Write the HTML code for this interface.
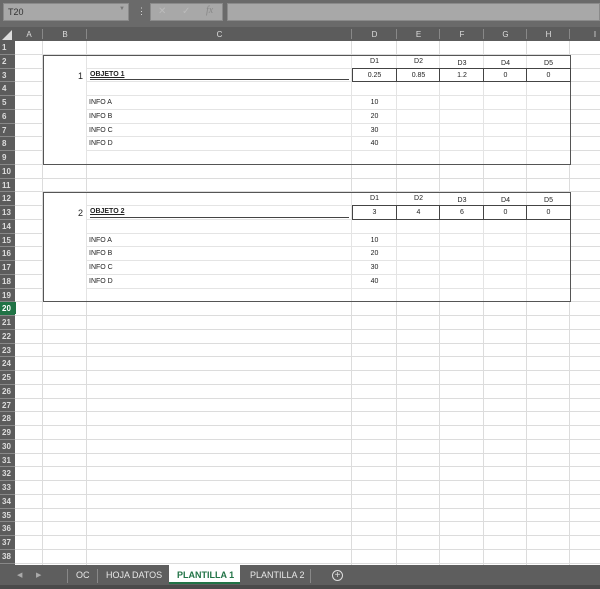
<!DOCTYPE html>
<html><head><meta charset="utf-8"><style>
*{margin:0;padding:0;box-sizing:border-box}
body{width:600px;height:589px;overflow:hidden;background:#fff;font-family:"Liberation Sans",sans-serif;position:relative}
.a{position:absolute}
.t{position:absolute;font-size:7px;color:#222;white-space:nowrap}
</style></head><body>
<div class="a" style="left:0;top:0;width:600px;height:27px;background:#6a6a6a"></div>
<div class="a" style="left:3px;top:3px;width:126px;height:18px;background:#a8a8a8;border:1px solid #8a8a8a"></div>
<div class="t" style="left:8px;top:7px;font-size:9px;color:#333">T20</div>
<div class="t" style="left:119px;top:6px;font-size:6px;color:#777">▼</div>
<div class="t" style="left:137px;top:6px;font-size:9px;color:#ddd">⋮</div>
<div class="a" style="left:150px;top:3px;width:73px;height:18px;background:#a8a8a8;border:1px solid #8a8a8a"></div>
<div class="t" style="left:158px;top:6px;font-size:10px;color:#bbb">✕</div>
<div class="t" style="left:182px;top:6px;font-size:10px;color:#bbb">✓</div>
<div class="t" style="left:206px;top:5px;font-size:10px;color:#888;font-style:italic;font-family:'Liberation Serif',serif">fx</div>
<div class="a" style="left:227px;top:3px;width:373px;height:18px;background:#a8a8a8;border:1px solid #8a8a8a"></div>
<div class="a" style="left:0;top:27px;width:600px;height:14px;background:#5c5c5c"></div>
<div class="a" style="left:0;top:41px;width:15px;height:525px;background:#5c5c5c"></div>
<div id="g"></div>
<div class="a" style="left:0;top:565px;width:600px;height:24px;background:#5e5e5e"></div>
<div class="a" style="left:0;top:585px;width:600px;height:4px;background:#4a4a4a"></div>
<div class="t" style="left:17px;top:571px;font-size:7px;color:#aaa">◀</div>
<div class="t" style="left:36px;top:571px;font-size:7px;color:#aaa">▶</div>
<div class="a" style="left:67px;top:569px;width:1px;height:14px;background:#888"></div>
<div class="t" style="left:76px;top:570px;font-size:9px;color:#e8e8e8">OC</div>
<div class="a" style="left:97px;top:569px;width:1px;height:14px;background:#888"></div>
<div class="t" style="left:106px;top:570px;font-size:9px;color:#e8e8e8">HOJA DATOS</div>
<div class="a" style="left:169px;top:565px;width:71px;height:19px;background:#fff;border-bottom:2px solid #217346"></div>
<div class="t" style="left:177px;top:570px;font-size:9px;color:#217346;font-weight:bold">PLANTILLA 1</div>
<div class="t" style="left:250px;top:570px;font-size:9px;color:#e8e8e8">PLANTILLA 2</div>
<div class="a" style="left:310px;top:569px;width:1px;height:14px;background:#888"></div>
<div class="a" style="left:332px;top:570px;width:11px;height:11px;border:1px solid #ddd;border-radius:50%;color:#ddd;font-size:10px;line-height:9px;text-align:center">+</div>
<script>
var g=document.getElementById('g'),h='';
var cx=[15,43,87,352,397,440,484,527,570,620],cn=['A','B','C','D','E','F','G','H','I'];
var R=13.75,T=41;
for(var i=0;i<9;i++){h+='<div class="t" style="left:'+cx[i]+'px;top:30px;width:'+(cx[i+1]-cx[i])+'px;text-align:center;font-size:8px;color:#ddd">'+cn[i]+'</div>';
h+='<div class="a" style="left:'+(cx[i+1]-1)+'px;top:29px;width:1px;height:10px;background:#888"></div>';
h+='<div class="a" style="left:'+(cx[i+1]-1)+'px;top:41px;width:1px;height:524px;background:#dcdcdc"></div>';}
h+='<div class="a" style="left:2px;top:30px;width:0;height:0;border-left:10px solid transparent;border-bottom:10px solid #ddd"></div>';
for(var r=1;r<=38;r++){var y=T+(r-1)*R;
h+='<div class="a" style="left:15px;top:'+(y+R-1).toFixed(1)+'px;width:585px;height:1px;background:#dcdcdc"></div>';
h+='<div class="a" style="left:0;top:'+(y+R-1).toFixed(1)+'px;width:15px;height:1px;background:#888"></div>';
if(r==20)h+='<div class="a" style="left:0;top:'+y.toFixed(1)+'px;width:15px;height:'+(R-1)+'px;background:#217346"></div>';
h+='<div class="t" style="left:2px;top:'+(y+2).toFixed(1)+'px;font-size:8px;color:'+(r==20?'#fff':'#ddd')+';font-weight:bold">'+r+'</div>';}
h+='<div class="a" style="left:15px;top:302px;width:1px;height:12px;background:#217346"></div>';
function box(r0,n,vals,num,obj){var top=T+(r0-1)*R,bot=T+(r0+7)*R;
h+='<div class="a" style="left:43px;top:'+top.toFixed(1)+'px;width:528px;height:'+(bot-top).toFixed(1)+'px;border:1px solid #555;background:#fff"></div>';
for(var k=1;k<8;k++){var yy=top+k*R-1;h+='<div class="a" style="left:87px;top:'+yy.toFixed(1)+'px;width:483px;height:1px;background:#e4e4e4"></div>';}
for(var c=3;c<8;c++)h+='<div class="a" style="left:'+(cx[c]-1)+'px;top:'+(top+1).toFixed(1)+'px;width:1px;height:'+(bot-top-2).toFixed(1)+'px;background:#e4e4e4"></div>';
h+='<div class="a" style="left:86px;top:'+(top+1).toFixed(1)+'px;width:1px;height:'+(bot-top-2).toFixed(1)+'px;background:#e4e4e4"></div>';
for(var c=0;c<5;c++){h+='<div class="t" style="left:'+cx[c+3]+'px;top:'+(top+3+(c>1?2:0)).toFixed(1)+'px;width:'+(cx[c+4]-cx[c+3])+'px;text-align:center">D'+(c+1)+'</div>';
h+='<div class="t" style="left:'+cx[c+3]+'px;top:'+(top+R+3).toFixed(1)+'px;width:'+(cx[c+4]-cx[c+3])+'px;text-align:center">'+vals[c]+'</div>';}
h+='<div class="a" style="left:352px;top:'+(top+R-1).toFixed(1)+'px;width:219px;height:'+(R+1)+'px;border:1px solid #444"></div>';
for(var c=4;c<8;c++)h+='<div class="a" style="left:'+(cx[c]-1)+'px;top:'+(top+R-1).toFixed(1)+'px;width:1px;height:'+(R+1)+'px;background:#444"></div>';
h+='<div class="t" style="left:78px;top:'+(top+R+2).toFixed(1)+'px;font-size:9px">'+num+'</div>';
h+='<div class="t" style="left:90px;top:'+(top+R+2).toFixed(1)+'px;font-weight:bold;text-decoration:underline">'+obj+'</div>';
h+='<div class="a" style="left:90px;top:'+(top+2*R-3).toFixed(1)+'px;width:259px;height:1px;background:#444"></div>';
var L=['A','B','C','D'];for(var k=0;k<4;k++){var yy=top+(3+k)*R+3;
h+='<div class="t" style="left:89px;top:'+yy.toFixed(1)+'px">INFO '+L[k]+'</div>';
h+='<div class="t" style="left:352px;top:'+yy.toFixed(1)+'px;width:45px;text-align:center">'+(k+1)*10+'</div>';}}
box(2,1,['0.25','0.85','1.2','0','0'],1,'OBJETO 1');
box(12,2,['3','4','6','0','0'],2,'OBJETO 2');
g.innerHTML=h;
</script>
</body></html>
